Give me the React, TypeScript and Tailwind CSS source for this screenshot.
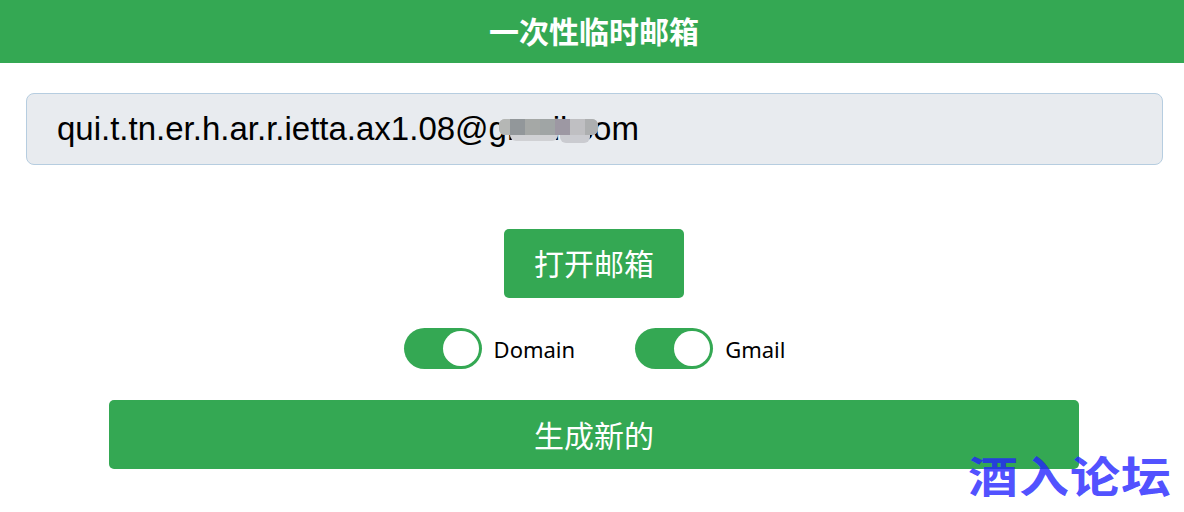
const GREEN = 'bg-[#34a853]';

const Toggle = ({ label }: { label: string }) => (
  <div className="flex items-center gap-3">
    <div className={`flex h-[41px] w-[78px] items-center justify-end rounded-full pr-[3px] ${GREEN}`}>
      <div className="h-[35px] w-[36px] rounded-full bg-white" />
    </div>
    <span className="font-['Noto_Sans','Open_Sans',sans-serif] text-[22px] leading-none text-black">{label}</span>
  </div>
);

export default function App() {
  return (
    <div className="relative h-[512px] w-[1184px] overflow-hidden bg-white font-['Noto_Sans_CJK_SC',sans-serif]">
      <header className={`flex h-[63px] items-center justify-center pb-[2px] pl-[4px] text-[30px] font-bold text-white ${GREEN}`}>
        一次性临时邮箱
      </header>

      <div className="ml-[26px] mt-[30px] flex h-[72px] w-[1137px] items-center rounded-lg border border-[#b6cde0] bg-[#e8ebef] pb-[2px] pl-[30px]">
        <span className="relative font-['Liberation_Sans',sans-serif] text-[33px] leading-none text-black">
          qui.t.tn.er.h.ar.r.ietta.ax1.08@gmail.com
          {/* blurred part of the address */}
          <span className="absolute left-[442px] top-[7px] flex h-[16px] w-[99px] rounded-md bg-[#b5b7b5]">
            <span className="h-full w-[11px] rounded-l-md bg-[#b5b7b5]" />
            <span className="h-full w-[15px] bg-[#92979a]" />
            <span className="h-full w-[15px] bg-[#a5a8a6]" />
            <span className="h-full w-[15px] bg-[#a0a5a5]" />
            <span className="h-full w-[15px] bg-[#9d98a3]" />
            <span className="h-full w-[15px] bg-[#bfbfc2]" />
            <span className="h-full w-[13px] rounded-r-md bg-[#adafb0]" />
          </span>
          <span className="absolute left-[453px] top-[23px] h-[6px] w-[48px] rounded-b-md bg-[#d0d1d4]" />
          <span className="absolute left-[503px] top-[23px] h-[8px] w-[30px] rounded-b-md bg-[#cacbd0]" />
        </span>
      </div>

      <div className="mt-[64px] flex justify-center pl-[4px]">
        <button className={`h-[69px] w-[180px] rounded-[5px] pb-[2px] text-[30px] text-white ${GREEN}`}>打开邮箱</button>
      </div>

      <div className="mt-[30px] flex justify-center gap-[60px] pl-[5px]">
        <Toggle label="Domain" />
        <Toggle label="Gmail" />
      </div>

      <div className="mt-[31px] flex justify-center pl-[4px]">
        <button className={`h-[69px] w-[970px] rounded-[5px] text-[30px] text-white ${GREEN}`}>生成新的</button>
      </div>

      {/* forum watermark */}
      <div className="absolute left-[968px] top-[449px] origin-top scale-y-[0.87] text-[50px] font-bold leading-[56px] tracking-[1px] text-[#2222ff]/80">
        酒入论坛
      </div>
    </div>
  );
}
